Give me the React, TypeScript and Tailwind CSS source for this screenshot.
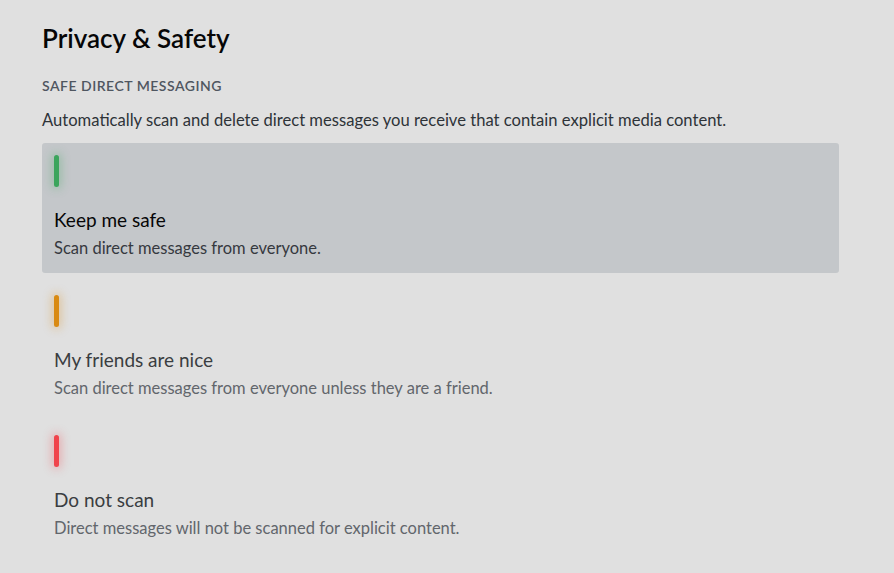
const options = [
  {
    title: 'Keep me safe',
    desc: 'Scan direct messages from everyone.',
    bar: 'bg-[#3ba55c] shadow-[0_0_10px_2px_rgba(59,165,92,0.35)]',
    selected: true,
  },
  {
    title: 'My friends are nice',
    desc: 'Scan direct messages from everyone unless they are a friend.',
    bar: 'bg-[#d98a12] shadow-[0_0_10px_2px_rgba(217,138,18,0.35)]',
    selected: false,
  },
  {
    title: 'Do not scan',
    desc: 'Direct messages will not be scanned for explicit content.',
    bar: 'bg-[#f0434b] shadow-[0_0_10px_2px_rgba(240,67,75,0.35)]',
    selected: false,
  },
];

export default function App() {
  return (
    <div className="min-h-[573px] w-full bg-[#e0e0e0] px-[42px] pt-[22px] font-['Lato','Noto_Sans',sans-serif]">
      <h1 className="text-[26px] font-semibold leading-[32px] text-[#060607]">Privacy &amp; Safety</h1>
      <h2 className="mt-[24px] text-[14px] font-semibold uppercase leading-[16px] tracking-[0.5px] text-[#4f5660]">
        Safe Direct Messaging
      </h2>
      <p className="mt-[16px] text-[16.6px] leading-[20px] text-[#2e3338]">
        Automatically scan and delete direct messages you receive that contain explicit media content.
      </p>
      <div className="mt-[13px] flex w-[797px] flex-col gap-[10px]">
        {options.map((o) => (
          <div
            key={o.title}
            className={
              'flex h-[130px] flex-col rounded-[3px] p-[12px] ' + (o.selected ? 'bg-[#c4c7ca]' : '')
            }
          >
            <div className={'h-[32px] w-[5px] rounded-full ' + o.bar} />
            <div
              className={
                'mt-[21px] text-[19px] leading-[24px] ' + (o.selected ? 'text-[#060607]' : 'text-[#3a3d41]')
              }
            >
              {o.title}
            </div>
            <div
              className={
                'mt-[6px] text-[16.5px] leading-[20px] ' + (o.selected ? 'text-[#36393f]' : 'text-[#62666c]')
              }
            >
              {o.desc}
            </div>
          </div>
        ))}
      </div>
    </div>
  );
}
